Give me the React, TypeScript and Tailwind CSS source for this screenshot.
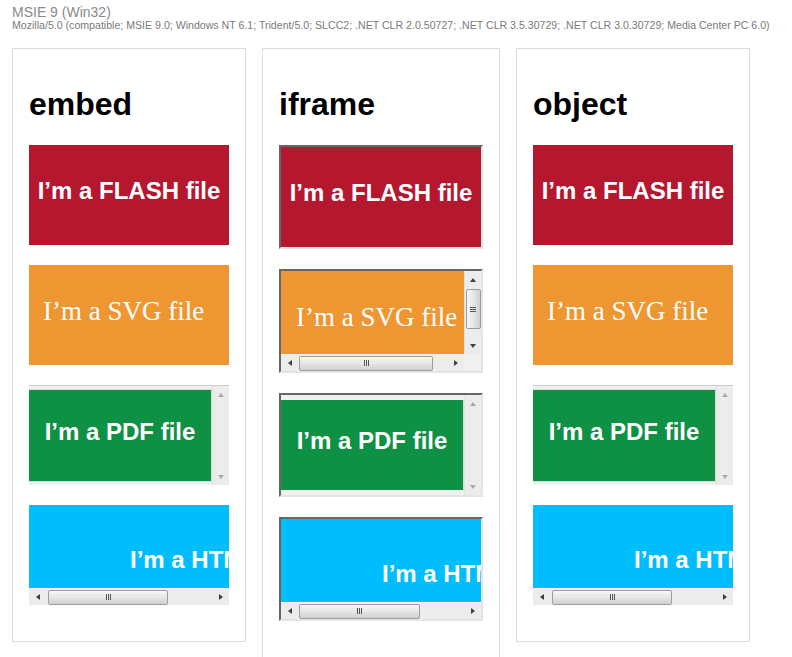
import React from "react";

const SANS = "font-['Liberation_Sans',Arial,sans-serif]";

function TriUp({ dim }: { dim?: boolean }) {
  return (
    <div
      className={
        dim
          ? "w-0 h-0 border-l-[3px] border-r-[3px] border-b-[4px] border-l-transparent border-r-transparent border-b-[#a8a8a8]"
          : "w-0 h-0 border-l-[3px] border-r-[3px] border-b-[4px] border-l-transparent border-r-transparent border-b-[#404040]"
      }
    />
  );
}
function TriDown({ dim }: { dim?: boolean }) {
  return (
    <div
      className={
        dim
          ? "w-0 h-0 border-l-[3px] border-r-[3px] border-t-[4px] border-l-transparent border-r-transparent border-t-[#a8a8a8]"
          : "w-0 h-0 border-l-[3px] border-r-[3px] border-t-[4px] border-l-transparent border-r-transparent border-t-[#404040]"
      }
    />
  );
}
function TriLeft() {
  return <div className="w-0 h-0 border-t-[3px] border-b-[3px] border-r-[4px] border-t-transparent border-b-transparent border-r-[#404040]" />;
}
function TriRight() {
  return <div className="w-0 h-0 border-t-[3px] border-b-[3px] border-l-[4px] border-t-transparent border-b-transparent border-l-[#404040]" />;
}

function HScroll({ thumbOffset, thumbWidth }: { thumbOffset: number; thumbWidth: number }) {
  return (
    <div className="h-[17px] bg-[#ececec] border-t border-[#f6f6f6] flex items-center">
      <div className="w-[17px] h-full flex items-center justify-center shrink-0">
        <TriLeft />
      </div>
      <div style={{ marginLeft: thumbOffset - 17, width: thumbWidth }} className="h-[15px] shrink-0 rounded-[2px] border border-[#9c9c9c] bg-gradient-to-b from-[#f7f7f7] via-[#e6e6e6] to-[#cfcfcf] flex items-center justify-center gap-[1px]">
        <div className="w-[1px] h-[6px] bg-[#555]" />
        <div className="w-[1px] h-[6px] bg-[#555]" />
        <div className="w-[1px] h-[6px] bg-[#555]" />
      </div>
      <div className="flex-1" />
      <div className="w-[17px] h-full flex items-center justify-center shrink-0">
        <TriRight />
      </div>
    </div>
  );
}

function VScroll({ thumb, dim }: { thumb?: { top: number; height: number }; dim?: boolean }) {
  return (
    <div className="w-[17px] h-full bg-[#ececec] border-l border-[#e2e2e2] flex flex-col items-center shrink-0">
      <div className="h-[17px] w-full flex items-center justify-center shrink-0">
        <TriUp dim={dim} />
      </div>
      {thumb && (
        <div style={{ marginTop: thumb.top - 17, height: thumb.height }} className="w-[15px] shrink-0 rounded-[2px] border border-[#9c9c9c] bg-gradient-to-r from-[#f7f7f7] via-[#e6e6e6] to-[#cfcfcf] flex flex-col items-center justify-center gap-[1px]">
          <div className="w-[6px] h-[1px] bg-[#555]" />
          <div className="w-[6px] h-[1px] bg-[#555]" />
          <div className="w-[6px] h-[1px] bg-[#555]" />
        </div>
      )}
      <div className="flex-1" />
      <div className="h-[17px] w-full flex items-center justify-center shrink-0">
        <TriDown dim={dim} />
      </div>
    </div>
  );
}

function Flash() {
  return (
    <div className="w-[200px] h-[100px] bg-[#b5172f] text-white font-bold text-[24px] leading-[24px] text-center pt-[34px] whitespace-nowrap">
      I’m a FLASH file
    </div>
  );
}

function SvgPlain() {
  return (
    <div className="w-[200px] h-[100px] bg-[#ee9631] text-white text-[27px] leading-[27px] pl-[14px] pt-[33px] font-['Liberation_Serif','Times_New_Roman',serif] whitespace-nowrap">
      I’m a SVG file
    </div>
  );
}

function SvgScrolled() {
  return (
    <div className="w-[200px] h-[100px] flex flex-col">
      <div className="h-[83px] flex">
        <div className="w-[183px] bg-[#ee9631] text-white text-[27px] leading-[27px] pl-[15px] pt-[33px] font-['Liberation_Serif','Times_New_Roman',serif] whitespace-nowrap overflow-hidden">
          I’m a SVG file
        </div>
        <VScroll thumb={{ top: 18, height: 40 }} />
      </div>
      <div className="flex">
        <div className="w-[183px]">
          <HScroll thumbOffset={18} thumbWidth={134} />
        </div>
        <div className="w-[17px] h-[17px] bg-[#f0f0f0]" />
      </div>
    </div>
  );
}

function PdfEmbed() {
  return (
    <div className="w-[200px] h-[100px] bg-[#f0f0f0] border-t border-[#cdcdcd] flex">
      <div className="w-[183px] pt-[3px]">
        <div className="h-[93px] bg-[#0f9145] border border-l-0 border-[#dadada] text-white font-bold text-[24px] leading-[24px] text-center pt-[30px] whitespace-nowrap">
          I’m a PDF file
        </div>
      </div>
      <VScroll dim />
    </div>
  );
}

function PdfIframe() {
  return (
    <div className="w-[200px] h-[100px] bg-[#f0f0f0] flex">
      <div className="w-[183px] pt-[5px]">
        <div className="h-[90px] bg-[#0f9145] border-r border-[#dadada] text-white font-bold text-[24px] leading-[24px] text-center pt-[29px] whitespace-nowrap">
          I’m a PDF file
        </div>
      </div>
      <VScroll dim />
    </div>
  );
}

function Html({ thumbOffset, thumbWidth }: { thumbOffset: number; thumbWidth: number }) {
  return (
    <div className="w-[200px] h-[100px] flex flex-col">
      <div className="h-[83px] bg-[#00bdfe] overflow-hidden whitespace-nowrap text-white font-bold text-[24px] leading-[24px] pl-[101px] pt-[43px]">
        I’m a HTML file
      </div>
      <HScroll thumbOffset={thumbOffset} thumbWidth={thumbWidth} />
    </div>
  );
}

function Frame({ children }: { children: React.ReactNode }) {
  return (
    <div className="w-[204px] h-[104px] border-2 border-t-[#666666] border-l-[#666666] border-b-[#e4e4e4] border-r-[#e4e4e4] overflow-hidden">
      {children}
    </div>
  );
}

function Column({ title, children }: { title: string; children: React.ReactNode }) {
  return (
    <div className="shrink-0 border border-[#dcdcdc] px-4 pt-4 pb-[36px] self-start">
      <h2 className="text-[32px] font-bold leading-[37px] mt-[21px] mb-[22px] text-black">{title}</h2>
      <div className="flex flex-col gap-5">{children}</div>
    </div>
  );
}

export default function App() {
  return (
    <div className={`${SANS} w-[792px] h-[657px] overflow-hidden bg-white px-[12px] pt-[5px]`}>
      <div className="text-[14px] leading-[15px] text-[#8a8a8a]">MSIE 9 (Win32)</div>
      <div className="text-[10.6px] leading-[11px] text-[#7a7a7a] whitespace-nowrap">
        Mozilla/5.0 (compatible; MSIE 9.0; Windows NT 6.1; Trident/5.0; SLCC2; .NET CLR 2.0.50727; .NET CLR 3.5.30729; .NET CLR 3.0.30729; Media Center PC 6.0)
      </div>
      <div className="mt-[17px] flex items-start gap-4">
        <Column title="embed">
          <Flash />
          <SvgPlain />
          <PdfEmbed />
          <Html thumbOffset={19} thumbWidth={120} />
        </Column>
        <Column title="iframe">
          <Frame>
            <Flash />
          </Frame>
          <Frame>
            <SvgScrolled />
          </Frame>
          <Frame>
            <PdfIframe />
          </Frame>
          <Frame>
            <Html thumbOffset={18} thumbWidth={121} />
          </Frame>
        </Column>
        <Column title="object">
          <Flash />
          <SvgPlain />
          <PdfEmbed />
          <Html thumbOffset={19} thumbWidth={120} />
        </Column>
      </div>
    </div>
  );
}
